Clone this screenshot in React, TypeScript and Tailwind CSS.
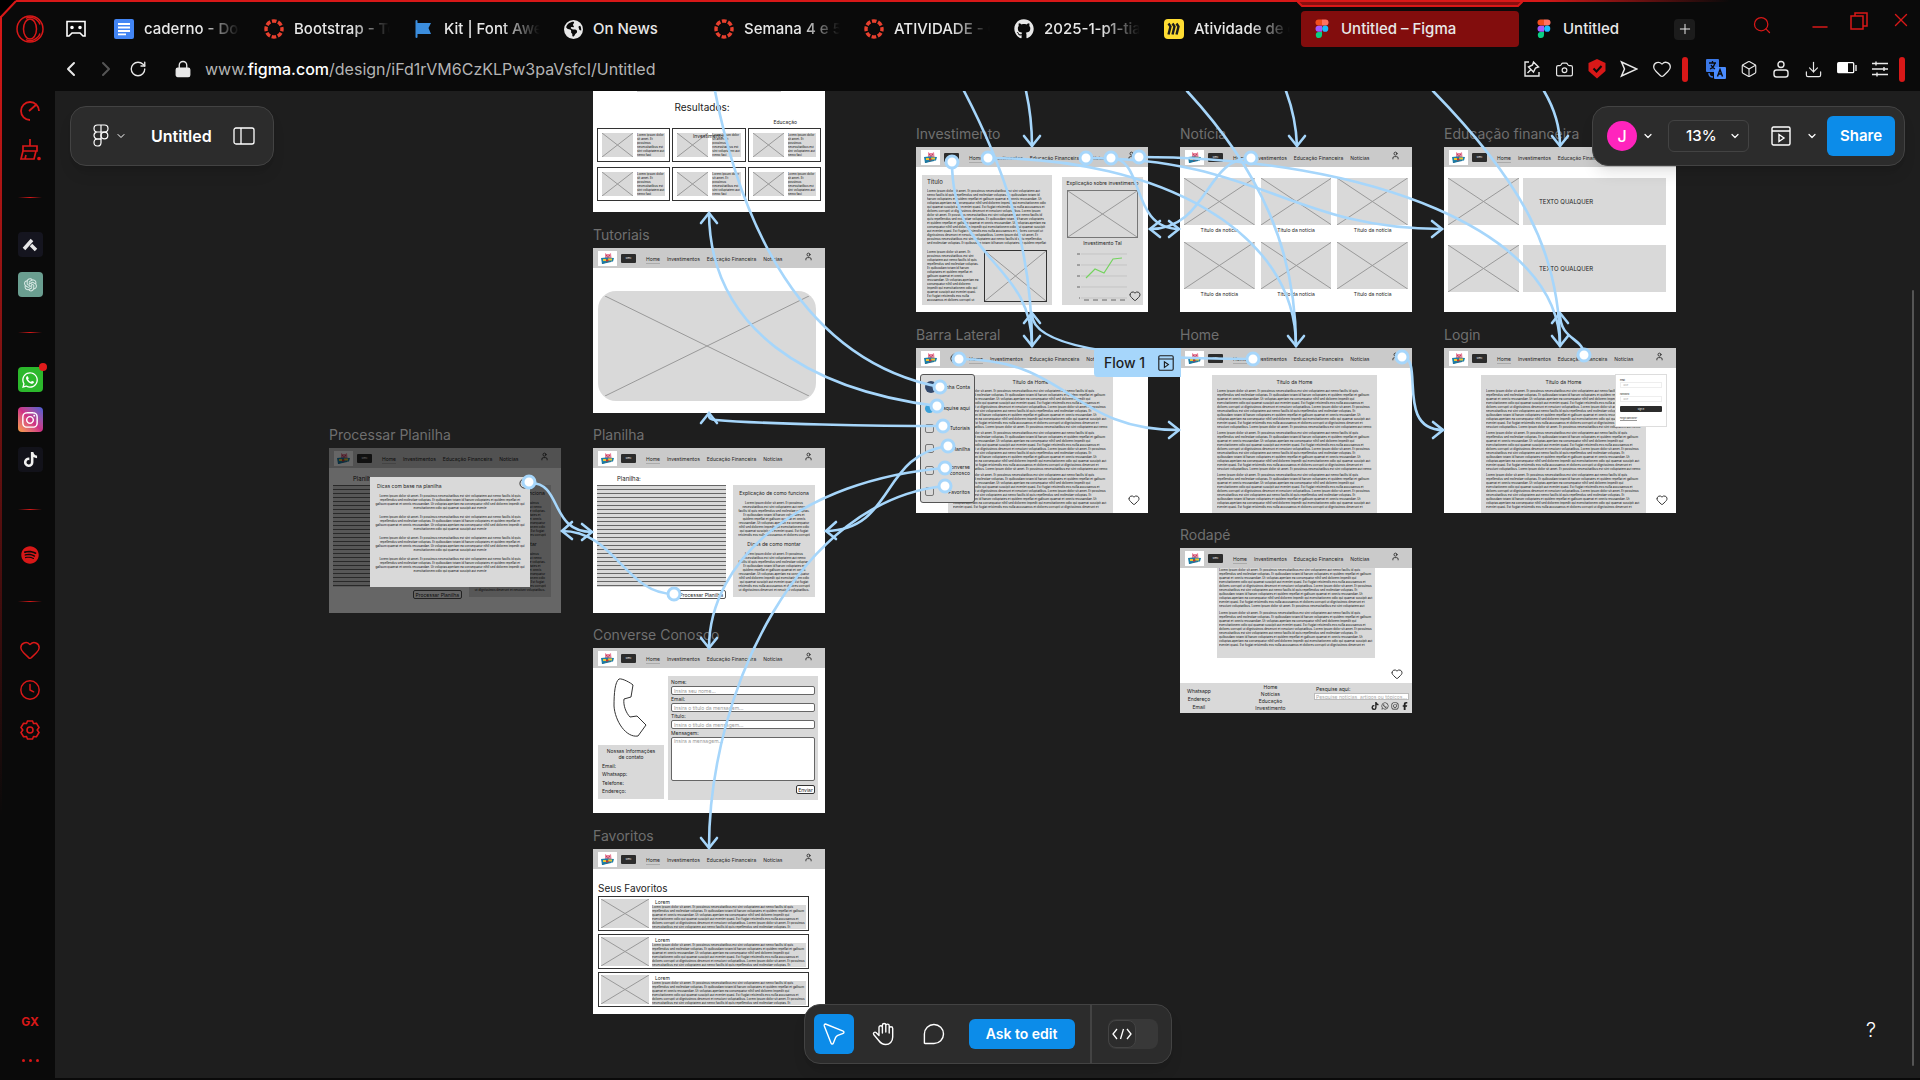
import React from "react";
import {
  Box,
  Camera,
  ChevronDown,
  ChevronLeft,
  ChevronRight,
  CircleX,
  Clock,
  Download,
  Heart,
  Lock,
  Minus,
  Plus,
  RotateCw,
  Search,
  User,
  X,
} from "lucide-react";
import { FaEarthAmericas, FaFacebookF, FaGithub, FaInstagram, FaSpotify, FaTiktok, FaWhatsapp } from "react-icons/fa6";
import { AiOutlineOpenAI } from "react-icons/ai";

const LOREM =
  "Lorem ipsum dolor sit amet. Et possimus necessitatibus est sint voluptatem aut nemo facilis id quis repellendus sed molestiae voluptas. Et quibusdam totam id harum voluptates et quidem repellat et galisum quaerat et omnis recusandae. Ut voluptas aperiam ea consequatur nihil sed dolorem impedit qui exercitationem odio qui quaerat suscipit aut eveniet quasi. Est fugiat reiciendis eos nulla accusamus et dolores corrupti ut dignissimos deserunt et nesciunt voluptatibus. ";
const PARAGRAPH = LOREM + LOREM;

/* ---------- logos ---------- */

function CanvasRing() {
  return (
    <svg viewBox="0 0 20 20" className="size-5 shrink-0">
      <circle cx="10" cy="10" r="8" fill="none" stroke="#e8402f" strokeWidth="3.4" strokeDasharray="4.6 1.68" strokeDashoffset="2.3" />
    </svg>
  );
}

function FigmaColor() {
  return (
    <svg viewBox="0 0 14 20" className="h-5 w-[14px] shrink-0">
      <path d="M3.5 0.5H7v6H3.5a3 3 0 0 1 0-6z" fill="#f24e1e" />
      <path d="M7 0.5h3.5a3 3 0 0 1 0 6H7z" fill="#ff7262" />
      <path d="M3.5 6.7H7v6H3.5a3 3 0 0 1 0-6z" fill="#a259ff" />
      <circle cx="10.2" cy="9.7" r="3.1" fill="#1abcfe" />
      <path d="M3.5 12.9H7v3.2a3.1 3.1 0 1 1-3.5-3.2z" fill="#0acf83" />
    </svg>
  );
}

function FigmaOutline() {
  return (
    <svg viewBox="0 0 16 24" className="h-6 w-4" fill="none" stroke="#fff" strokeWidth="1.2">
      <path d="M8 1H4.5a3.4 3.4 0 0 0 0 7H8zM8 1h3.5a3.4 3.4 0 0 1 0 7H8zM8 8H4.5a3.4 3.4 0 0 0 0 7H8z" />
      <circle cx="11.4" cy="11.5" r="3.4" />
      <path d="M8 15H4.6A3.5 3.5 0 1 0 8 18.7z" />
    </svg>
  );
}

function DocsLogo() {
  return (
    <svg viewBox="0 0 20 20" className="size-5 shrink-0">
      <rect width="20" height="20" rx="2" fill="#4285f4" />
      <path d="M4 5h12M4 8.5h12M4 12h12M4 15.300h8" stroke="#fff" strokeWidth="1.8" />
    </svg>
  );
}

function FlagLogo() {
  return (
    <svg viewBox="0 0 20 20" className="size-5 shrink-0">
      <path d="M2.500 2v16" stroke="#3b8ddd" strokeWidth="2" strokeLinecap="round" />
      <path d="M3 4h14l-2.500 5L17 15H3z" fill="#3b8ddd" />
    </svg>
  );
}

function MiroLogo() {
  return (
    <svg viewBox="0 0 20 20" className="size-5 shrink-0">
      <rect width="20" height="20" rx="4" fill="#ffdd33" />
      <path d="M4.500 4.500l2 3-2 8M8.500 4.500l2 3-2 8M12.500 4.500l2 3-2 8" stroke="#1c1c1e" strokeWidth="2.400" fill="none" />
    </svg>
  );
}

function OperaLogo() {
  return (
    <svg viewBox="0 0 28 28" className="size-7" fill="none" stroke="#d81818" strokeWidth="1.500">
      <circle cx="14" cy="14" r="13" />
      <ellipse cx="14" cy="14" rx="6.500" ry="10" />
      <path d="M10 3.500c4-3 12 0 14 6M10 24.500c4 3 12 0 14-6" />
    </svg>
  );
}

function PiggyLogo() {
  return (
    <svg viewBox="0 0 19 15" className="h-[15px] w-[19px] shrink-0">
      <rect width="19" height="15" fill="#fff" />
      <path d="M7 2l1.500 1h3L13 2l.5 5H7z" fill="#e8829a" />
      <path d="M8 4.500h1M11 4.500h1M9 6h2" stroke="#a33a55" strokeWidth="0.800" />
      <path d="M3 7l5-.5 8 .5-1 3.500-5 .5-6 2z" fill="#1d7fa8" />
      <path d="M5 8h3v2H5zM10 7.500h4v2h-4z" fill="#e9c630" />
      <path d="M8 8.500h2.500v2H8z" fill="#c8362c" />
      <path d="M4 12.500l9-2" stroke="#1f6f95" strokeWidth="1.200" />
    </svg>
  );
}

/* ---------- browser chrome ---------- */

function Tab({ icon, title, fade = true }: { icon: React.ReactNode; title: string; fade?: boolean }) {
  return (
    <button className="flex w-[150px] shrink-0 items-center gap-[10px] pr-6 text-left">
      {icon}
      <span
        className={
          fade
            ? "min-w-0 flex-1 overflow-hidden whitespace-nowrap [mask-image:linear-gradient(to_right,black_60%,transparent)]"
            : "whitespace-nowrap"
        }
      >
        {title}
      </span>
    </button>
  );
}

function BrowserHeader() {
  return (
    <header className="relative shrink-0 pb-[9px] text-[#e8e8e8]">
      <div className="flex h-14 items-center pt-[2px] text-[15px] font-medium">
        <button aria-label="Opera" className="ml-4">
          <OperaLogo />
        </button>
        <button aria-label="Workspace" className="ml-[22px] mr-[28px]">
          <svg viewBox="0 0 20 20" className="size-5" fill="none" stroke="#fff" strokeWidth="1.600">
            <path d="M1 2.500h18V17h-2l-3-3H6l-3 3H1z" />
            <circle cx="6" cy="8.500" r="1" fill="#fff" />
            <circle cx="14" cy="8.500" r="1" fill="#fff" />
          </svg>
        </button>
        <Tab icon={<DocsLogo />} title="caderno - Documentos" />
        <Tab icon={<CanvasRing />} title="Bootstrap - Tópicos" />
        <Tab icon={<FlagLogo />} title="Kit | Font Awesome" />
        <Tab icon={<FaEarthAmericas className="size-[19px] shrink-0" />} title="On News" fade={false} />
        <Tab icon={<CanvasRing />} title="Semana 4 e 5 - Aula" />
        <Tab icon={<CanvasRing />} title="ATIVIDADE - Grupo" />
        <Tab icon={<FaGithub className="size-5 shrink-0" />} title="2025-1-p1-tiaw" />
        <Tab icon={<MiroLogo />} title="Atividade de grupo" />
        <div className="relative -ml-[13px] w-[218px] shrink-0">
          <svg viewBox="0 0 226 8" className="absolute -top-[11px] -left-1 h-2 w-[226px]">
            <path d="M0 0h226l-5 6H5z" fill="#8a0f0f" />
            <path d="M0 1l5 5h216l5-5" fill="none" stroke="#d81818" strokeWidth="2" />
          </svg>
          <button className="flex h-9 w-full items-center gap-3 rounded bg-[#820d0d] pl-[14px]">
            <FigmaColor />
            Untitled – Figma
          </button>
        </div>
        <button className="ml-[18px] flex w-[137px] shrink-0 items-center gap-3">
          <FigmaColor />
          Untitled
        </button>
        <button aria-label="New tab" className="flex size-[21px] shrink-0 items-center justify-center rounded-sm bg-[#1c1c1c]">
          <Plus className="size-4" strokeWidth={1.5} />
        </button>
        <div className="ml-auto flex shrink-0 items-center pr-2 text-[#d81818]">
          <button aria-label="Search tabs" className="mr-9 mb-2">
            <Search className="size-5" strokeWidth={1.5} />
          </button>
          <button aria-label="Minimize" className="mb-1 mr-[18px]">
            <Minus className="size-6" strokeWidth={1.5} />
          </button>
          <button aria-label="Restore" className="mr-[22px] mb-4">
            <svg viewBox="0 0 18 18" className="size-[18px]" fill="none" stroke="currentColor" strokeWidth="1.500">
              <path d="M1 4h12v13H1zM5 4V1h12v13h-4" />
            </svg>
          </button>
          <button aria-label="Close" className="mb-[18px]">
            <X className="size-[22px]" strokeWidth={1.5} />
          </button>
        </div>
      </div>
      <div className="flex h-[26px] items-center">
        <button aria-label="Back" className="ml-[59px]">
          <ChevronLeft className="size-6" strokeWidth={2} />
        </button>
        <button aria-label="Forward" className="ml-[11px] text-[#555]">
          <ChevronRight className="size-6" strokeWidth={2} />
        </button>
        <button aria-label="Reload" className="ml-[11px]">
          <RotateCw className="size-[18px]" strokeWidth={1.8} />
        </button>
        <Lock className="ml-[27px] size-[18px] [&_rect]:fill-current" strokeWidth={1.8} />
        <span className="ml-[13px] text-base text-[#b4b4b4]">
          www.<span className="font-medium text-white">figma.com</span>/design/iFd1rVM6CzKLPw3paVsfcI/Untitled
        </span>
        <div className="ml-auto flex items-center gap-[14px] pr-[15px]">
          <button aria-label="Pin">
            <svg viewBox="0 0 18 18" className="size-[18px]" fill="none" stroke="currentColor" strokeWidth="1.400">
              <path d="M6 2H2v14h14v-4" />
              <path d="M10.500 2l5 5-3 1-2 4-5-5 4-2zM8 9.500L4.500 13" />
            </svg>
          </button>
          <button aria-label="Snapshot">
            <Camera className="size-[19px]" strokeWidth={1.5} />
          </button>
          <button aria-label="Ad blocker">
            <svg viewBox="0 0 18 20" className="h-5 w-[18px]">
              <path d="M9 0l8.500 4v8L9 19.500 0.500 12V4z" fill="#d81818" />
              <path d="M5.500 9.500l3 3 5-5.500" fill="none" stroke="#0a0a0a" strokeWidth="2" />
            </svg>
          </button>
          <button aria-label="Send">
            <svg viewBox="0 0 18 18" className="size-[18px]" fill="none" stroke="currentColor" strokeWidth="1.500">
              <path d="M1.500 2l15.500 7-15.500 7 3-7z" />
            </svg>
          </button>
          <button aria-label="Favorite">
            <Heart className="size-5" strokeWidth={1.5} />
          </button>
          <span className="-ml-1 h-[25px] w-[6px] rounded-sm bg-[#d81818]" />
          <button aria-label="Translate" className="ml-1">
            <svg viewBox="0 0 20 20" className="size-5">
              <rect width="13" height="13" rx="1" fill="#3b78e7" />
              <rect x="8" y="8" width="12" height="12" rx="1" fill="#4a8cff" />
              <path d="M3 4h7M6.500 2v2M4 10c3-1 4-3 5-6M5 6c1 2 2 3 4 4" stroke="#0a0a0a" strokeWidth="1.300" fill="none" />
              <path d="M11.500 17.500l2.500-7 2.500 7M12.500 15h3" stroke="#0a0a0a" strokeWidth="1.400" fill="none" />
              <path d="M3 14c0 3 2 4 4 4" stroke="#3b78e7" strokeWidth="1.500" fill="none" />
            </svg>
          </button>
          <button aria-label="Extensions">
            <Box className="size-[18px]" strokeWidth={1.5} />
          </button>
          <button aria-label="Profile">
            <svg viewBox="0 0 18 18" className="size-[18px]" fill="none" stroke="currentColor" strokeWidth="1.400">
              <circle cx="9" cy="4.500" r="3" />
              <rect x="2" y="10" width="14" height="7" rx="2.500" />
            </svg>
          </button>
          <button aria-label="Downloads">
            <Download className="size-[19px]" strokeWidth={1.5} />
          </button>
          <button aria-label="Battery">
            <svg viewBox="0 0 20 12" className="mb-[2px] h-3 w-5">
              <rect x="0.700" y="0.700" width="16" height="10" rx="1" fill="none" stroke="#fff" strokeWidth="1.300" />
              <rect x="1" y="1" width="10" height="10" fill="#fff" />
              <path d="M19 3v6" stroke="#fff" strokeWidth="1.300" />
            </svg>
          </button>
          <button aria-label="Easy setup">
            <svg viewBox="0 0 18 18" className="size-[18px]" stroke="currentColor" strokeWidth="1.400">
              <path d="M1 3.500h16M1 9h16M1 14.500h16M5 1.500v4M13 7v4M6 12.500v4" />
            </svg>
          </button>
          <span className="-ml-1 h-[25px] w-[6px] rounded-sm bg-[#d81818]" />
        </div>
      </div>
    </header>
  );
}

function SideRule() {
  return <span className="h-px w-6 bg-linear-to-r from-transparent via-[#d81818] to-transparent" />;
}

function BrowserSidebar() {
  return (
    <aside className="flex w-[55px] shrink-0 flex-col items-center pt-[7px] pb-[14px] pl-[5px] text-[#d81818]">
      <button aria-label="Speed dial" className="flex h-[25px] items-center">
        <svg viewBox="0 0 22 22" className="size-[22px]" fill="none" stroke="currentColor" strokeWidth="1.800">
          <path d="M11 20A9 9 0 1 1 20 11M10 11l8-7" />
        </svg>
      </button>
      <button aria-label="Cleaner" className="mt-[14px] flex h-[25px] items-center">
        <svg viewBox="0 0 22 22" className="size-[22px]" fill="none" stroke="currentColor" strokeWidth="1.700">
          <path d="M11 0v7M4 7h14v5H4zM4 12l-2 8h13l2-8M6 20l1-4" />
          <circle cx="20" cy="19.500" r="1" fill="currentColor" />
        </svg>
      </button>
      <div className="flex h-[70px] items-center"><SideRule /></div>
      <button aria-label="Aria" className="flex size-[25px] items-center justify-center rounded bg-[#15151f]">
        <svg viewBox="0 0 16 16" className="size-4" stroke="#e8e8e8" strokeWidth="3.500" fill="none">
          <path d="M2 12l8-9M9 8l5 5" />
        </svg>
      </button>
      <button aria-label="ChatGPT" className="mt-[15px] flex size-[25px] items-center justify-center rounded bg-[#6a9e90] text-[#d8e8e4]">
        <AiOutlineOpenAI className="size-[17px]" />
      </button>
      <div className="flex h-[70px] items-center"><SideRule /></div>
      <button aria-label="WhatsApp" className="relative flex size-[25px] items-center justify-center rounded bg-[#2cb82c] text-white">
        <FaWhatsapp className="size-[18px]" />
        <span className="absolute -top-1 -right-1 size-2 rounded-full bg-[#e01b1b]" />
      </button>
      <button aria-label="Instagram" className="mt-[15px] flex size-[25px] items-center justify-center rounded bg-linear-to-tr from-[#f9a13c] via-[#cf2f86] to-[#3f5bd6] text-white">
        <FaInstagram className="size-[18px]" />
      </button>
      <button aria-label="TikTok" className="mt-[15px] flex size-[25px] items-center justify-center rounded bg-[#12121a] text-[#f0f0f0]">
        <FaTiktok className="size-[15px]" />
      </button>
      <div className="flex h-[74px] items-center"><SideRule /></div>
      <button aria-label="Player"><FaSpotify className="size-[18px]" /></button>
      <div className="flex h-[75px] items-center"><SideRule /></div>
      <button aria-label="Favorites"><Heart className="size-[22px]" strokeWidth={1.6} /></button>
      <button aria-label="History" className="mt-[18px]"><Clock className="size-[22px]" strokeWidth={1.6} /></button>
      <button aria-label="Settings" className="mt-[18px]">
        <svg viewBox="0 0 22 22" className="size-[22px]" fill="none" stroke="currentColor" strokeWidth="1.600">
          <path d="M8.500 2h5l1 2.500 3-.2 2.500 4.200-1.800 2.500 1.800 2.500-2.500 4.200-3-.2-1 2.500h-5l-1-2.500-3 .2L2 13.500 3.800 11 2 8.500l2.500-4.200 3 .2z" />
          <circle cx="11" cy="11" r="3" />
        </svg>
      </button>
      <span className="mt-auto text-xs font-bold">GX</span>
      <button aria-label="More" className="mt-[29px] mb-1 flex gap-1">
        <span className="size-[3px] rounded-full bg-[#d81818]" />
        <span className="size-[3px] rounded-full bg-[#d81818]" />
        <span className="size-[3px] rounded-full bg-[#d81818]" />
      </button>
    </aside>
  );
}

/* ---------- wireframe pieces ---------- */

function Cross({ className = "" }: { className?: string }) {
  return (
    <svg viewBox="0 0 100 100" preserveAspectRatio="none" className={"block bg-[#d9d9d9] " + className}>
      <path d="M0 0L100 100M100 0L0 100" stroke="#999" strokeWidth="1" vectorEffect="non-scaling-stroke" />
    </svg>
  );
}

function Tiny({ className = "", text = PARAGRAPH }: { className?: string; text?: string }) {
  return <p className={"overflow-hidden text-[3px] leading-[4px] font-medium text-[#2b2b2b] " + className}>{text}</p>;
}

function SiteNav({ closable = false }: { closable?: boolean }) {
  return (
    <div className="flex h-5 shrink-0 items-center bg-[#cacaca] pl-[5px] pr-3">
      <PiggyLogo />
      {closable ? (
        <CircleX className="ml-[10px] mr-[-2px] size-[11px]" color="#222" strokeWidth={2} />
      ) : (
        <button className="ml-1 h-[9px] w-[15px] rounded-[1px] bg-[#2c2c2c] text-center text-[2px] leading-[9px] text-white">Menu</button>
      )}
      <nav className="ml-[10px] flex gap-[7px] pt-[2px] text-[5px] leading-[8px] text-[#222]">
        <a href="#home" className="border-b border-[#aaa]">Home</a>
        <a href="#investimentos">Investimentos</a>
        <a href="#educacao">Educação Financeira</a>
        <a href="#noticias">Notícias</a>
      </nav>
      <User className="mb-1 ml-auto size-[9px]" color="#333" strokeWidth={2.5} />
    </div>
  );
}

function Artboard({ title, place, children }: { title: string; place: string; children: React.ReactNode }) {
  return (
    <section className={"absolute w-[232px] " + place}>
      <h2 className="mb-[3px] whitespace-nowrap pt-px text-sm leading-5 text-[#6f6f6f]">{title}</h2>
      <div className="relative flex h-[165px] flex-col overflow-hidden bg-white text-[#222]">{children}</div>
    </section>
  );
}

function FrameHeart({ place = "right-2 bottom-[7px]" }: { place?: string }) {
  return <Heart className={"absolute size-3 " + place} color="#333" strokeWidth={2} />;
}

function ResultsBoard() {
  const cells = [0, 1, 2, 3, 4, 5];
  return (
    <Artboard title="Pesquisa" place="left-[538px] top-[-68px]">
      <div className="mx-auto mt-[44px] h-px w-36 bg-[#ccc]" />
      <h3 className="pr-[14px] pt-[8px] text-center text-[10px] leading-[14px]">Resultados:</h3>
      <p className="pr-7 pt-[5px] text-right text-[5px] leading-[6px]">Educação</p>
      <div className="relative grid grid-cols-3 gap-x-[2px] gap-y-[5px] px-1 pt-[3px]">
        {cells.map((c) => (
          <div key={c} className="flex h-[34px] gap-1 border border-[#333] p-1">
            <Cross className="h-6 w-[31px]" />
            <Tiny className="h-6 flex-1 bg-[#d9d9d9]" text={LOREM.slice(0, 88)} />
          </div>
        ))}
        <span className="absolute left-[100px] top-[8px] text-[5px] leading-[6px]">Investimento</span>
      </div>
    </Artboard>
  );
}

function TutorialsBoard() {
  return (
    <Artboard title="Tutoriais" place="left-[538px] top-[133px]">
      <SiteNav />
      <div className="mr-[9px] ml-[5px] mt-[23px] flex h-[110px] rounded-[18px] bg-[#d9d9d9] px-[7px] py-[5px]">
        <Cross className="h-full w-full" />
      </div>
    </Artboard>
  );
}

function SheetContent() {
  return (
    <>
      <SiteNav />
      <h3 className="pl-6 pt-2 text-[6px] leading-[6px]">Planilha:</h3>
      <div className="flex justify-between pl-1 pr-[10px] pt-[3px]">
        <div className="w-[129px]">
          <div className="h-[102px] bg-[repeating-linear-gradient(to_bottom,#666_0px,#666_1px,#d9d9d9_1px,#d9d9d9_4px)]" />
          <div className="flex justify-end pt-[3px]">
            <button className="h-[9px] rounded-[2px] border border-[#555] px-[2px] text-[5px] leading-[6px]">Processar Planilha</button>
          </div>
        </div>
        <div className="h-[112px] w-[82px] bg-[#d9d9d9] px-[5px] pt-[5px] text-center">
          <h4 className="whitespace-nowrap text-[5px] leading-[6px]">Explicação de como funciona</h4>
          <Tiny className="mt-[5px] h-9" />
          <h4 className="mt-1 text-[5px] leading-[6px]">Dicas de como montar</h4>
          <Tiny className="mt-[5px] h-10" />
        </div>
      </div>
    </>
  );
}

function SheetBoard() {
  return (
    <Artboard title="Planilha" place="left-[538px] top-[333px]">
      <SheetContent />
    </Artboard>
  );
}

function ProcessBoard() {
  return (
    <Artboard title="Processar Planilha" place="left-[274px] top-[333px]">
      <SheetContent />
      <div className="absolute inset-0 bg-black/60" />
      <div className="absolute left-[41px] top-[29px] h-[110px] w-40 bg-[#d9d9d9] px-1 pt-[6px]">
        <h3 className="px-[3px] text-[5px] leading-[6px]">Dicas com base na planilha</h3>
        {[0, 1, 2, 3].map((k) => (
          <Tiny key={k} className="mt-[5px] h-4 text-center" text={PARAGRAPH.slice(0, 350)} />
        ))}
        <CircleX className="absolute right-0 top-[1px] size-[11px]" color="#222" strokeWidth={2} />
      </div>
    </Artboard>
  );
}

function ContactBoard() {
  const field = "w-full rounded-[2px] border border-[#666] bg-white px-[2px] text-[5px] leading-[6px] placeholder:text-[#999]";
  return (
    <Artboard title="Converse Conosco" place="left-[538px] top-[533px]">
      <SiteNav />
      <div className="flex gap-1 pl-[5px] pr-[7px] pt-2">
        <div className="w-[66px]">
          <svg viewBox="0 0 36 62" className="mx-auto mt-[1px] h-[62px] w-9" fill="none" stroke="#333" strokeWidth="1">
            <path d="M6 2c3-1 12 4 14 6l-2 12-7 2c-1 6 2 14 6 18l7-1 9 9-8 11c-12 2-23-15-24-30C1 16 2 5 6 2z" />
          </svg>
          <div className="mt-[6px] h-[54px] bg-[#d9d9d9] px-1 pt-[3px] text-[5px] leading-[6px]">
            <p className="text-center">Nossas Informações<br />de contato</p>
            <p className="mt-[3px]">Email:</p>
            <p className="mt-[2px]">Whatsapp:</p>
            <p className="mt-[3px]">Telefone:</p>
            <p className="mt-[2px]">Endereço:</p>
          </div>
        </div>
        <form className="flex h-[124px] flex-1 flex-col bg-[#d9d9d9] px-[3px] pt-[3px] text-[5px] leading-[7px]">
          <label htmlFor="c-name">Nome:</label>
          <input id="c-name" className={"mb-[1px] h-[9px] " + field} placeholder="Insira seu nome..." />
          <label htmlFor="c-email">Email:</label>
          <input id="c-email" className={"mb-[1px] h-[9px] " + field} placeholder="Insira o título da mensagem..." />
          <label htmlFor="c-title">Título:</label>
          <input id="c-title" className={"mb-[1px] h-[9px] " + field} placeholder="Insira o título da mensagem..." />
          <label htmlFor="c-msg">Mensagem:</label>
          <textarea id="c-msg" className={"h-11 resize-none " + field} placeholder="Insira a mensagem..." />
          <button type="button" className="mt-1 h-[9px] w-[19px] self-end rounded-[2px] border border-[#333] bg-white text-[5px] leading-[6px]">Enviar</button>
        </form>
      </div>
    </Artboard>
  );
}

function FavoritesBoard() {
  return (
    <Artboard title="Favoritos" place="left-[538px] top-[734px]">
      <SiteNav />
      <h3 className="pl-[5px] pt-[13px] text-[10px] leading-[12px]">Seus Favoritos</h3>
      <div className="flex flex-col gap-[3px] pl-[5px] pr-4 pt-[2px]">
        {[0, 1, 2].map((k) => (
          <div key={k} className="flex h-[35px] gap-[3px] border border-[#333] px-[2px] pt-[2px]">
            <Cross className="h-[29px] w-12" />
            <div className="flex-1">
              <h4 className="pl-[3px] text-[5px] leading-[6px]">Lorem</h4>
              <Tiny className="h-6 bg-[#d9d9d9]" />
            </div>
          </div>
        ))}
      </div>
    </Artboard>
  );
}

function InvestmentBoard() {
  return (
    <Artboard title="Investimento" place="left-[861px] top-[32px]">
      <SiteNav />
      <div className="flex gap-[10px] pl-[6px] pr-[5px] pt-2">
        <div className="h-[130px] w-[130px] bg-[#d9d9d9] px-[5px] pt-1">
          <h3 className="text-[6px] leading-[6px]">Título</h3>
          <Tiny className="mt-1 h-14" text={PARAGRAPH + PARAGRAPH} />
          <div className="mt-[5px] flex gap-1">
            <Tiny className="h-[52px] w-[53px]" />
            <Cross className="h-[52px] flex-1 border border-[#333]" />
          </div>
        </div>
        <div className="relative mt-[2px] h-[128px] w-[81px] bg-[#d9d9d9] px-[5px] pt-[3px] text-center text-[5px] leading-[7px]">
          <h3 className="-mx-1 whitespace-nowrap">Explicação sobre investimento</h3>
          <Cross className="mt-[3px] h-12 w-full border border-[#777]" />
          <h3 className="mt-[2px]">Investimento Tal</h3>
          <svg viewBox="0 0 60 52" className="mt-1 h-[52px] w-[60px]" fill="none">
            <path d="M14 3h46M14 14h46M14 25h46M14 36h46M14 47h46" stroke="#bbb" strokeWidth="0.700" />
            <path d="M10 3h3M10 14h3M10 25h3M10 36h3M12 47h1M17 49h5M26 49h5M35 49h5M44 49h5M53 49h5" stroke="#666" strokeWidth="1" />
            <path d="M19 27l9-9 9 4 9-14 9-1" stroke="#74d35f" strokeWidth="1.200" />
          </svg>
          <FrameHeart place="right-[2px] bottom-[3px]" />
        </div>
      </div>
    </Artboard>
  );
}

function NewsBoard() {
  return (
    <Artboard title="Notícia" place="left-[1125px] top-[32px]">
      <SiteNav />
      <div className="grid grid-cols-3 gap-x-[6px] px-1 pt-[11px] text-center text-[5px] leading-[8px]">
        {[0, 1, 2, 3, 4, 5].map((k) => (
          <figure key={k} className="pb-2">
            <Cross className="h-[47px] w-full" />
            <figcaption className="pt-px">Título da notícia</figcaption>
          </figure>
        ))}
      </div>
    </Artboard>
  );
}

function EducationBoard() {
  return (
    <Artboard title="Educação financeira" place="left-[1389px] top-[32px]">
      <SiteNav />
      <div className="flex flex-col gap-5 pl-1 pr-[10px] pt-[11px]">
        {[0, 1].map((k) => (
          <div key={k} className="flex gap-1">
            <Cross className="h-[47px] w-[71px]" />
            <p className="flex h-[47px] flex-1 items-center bg-[#d9d9d9] pl-4 text-[6px]">TEXTO QUALQUER</p>
          </div>
        ))}
      </div>
    </Artboard>
  );
}

function HomeText({ inset }: { inset: string }) {
  return (
    <div className={"mt-[7px] h-[138px] w-[165px] shrink-0 bg-[#d9d9d9] px-[5px] pt-1 " + inset}>
      <h3 className="text-center text-[5px] leading-[6px]">Título da Home</h3>
      <Tiny className="mt-1 h-10" text={PARAGRAPH + LOREM} />
      <Tiny className="mt-[2px] h-10" text={PARAGRAPH + LOREM} />
      <Tiny className="mt-[2px] h-9" text={PARAGRAPH + LOREM} />
    </div>
  );
}

function SideMenuBoard() {
  const items = ["Minha Conta", "Pesquise aqui", "Tutoriais", "Planilha", "Converse conosco", "Favoritos"];
  return (
    <Artboard title="Barra Lateral" place="left-[861px] top-[233px]">
      <SiteNav closable />
      <HomeText inset="ml-8" />
      <ul className="absolute left-1 top-[26px] flex h-[129px] w-[55px] flex-col justify-around rounded-[3px] border border-[#555] bg-[#d9d9d9] px-1 text-right text-[5px] leading-[6px]">
        {items.map((t, i) => (
          <li key={t} className="flex items-center justify-between">
            <span
              className={
                i === 0
                  ? "size-3 shrink-0 rounded-full bg-[#34496b]"
                  : i === 1
                    ? "size-[9px] shrink-0 rounded-full bg-[#3aa0d8]"
                    : "size-[9px] shrink-0 rounded-[2px] border border-[#777]"
              }
            />
            {t}
          </li>
        ))}
      </ul>
      <FrameHeart />
    </Artboard>
  );
}

function HomeBoard() {
  return (
    <Artboard title="Home" place="left-[1125px] top-[233px]">
      <SiteNav />
      <HomeText inset="ml-8" />
    </Artboard>
  );
}

function LoginBoard() {
  return (
    <Artboard title="Login" place="left-[1389px] top-[233px]">
      <SiteNav />
      <HomeText inset="ml-[37px]" />
      <form className="absolute left-[171px] top-[26px] flex h-[53px] w-[52px] flex-col border border-[#ddd] bg-white px-1 pt-[3px] text-[2px] leading-[4px]">
        <label htmlFor="l-email">Email</label>
        <input id="l-email" className="mb-1 h-[6px] w-full border border-[#eee] px-[2px] placeholder:text-[#aaa]" placeholder="Value" />
        <label htmlFor="l-pass">Password</label>
        <input id="l-pass" className="mb-1 h-[6px] w-full border border-[#eee] px-[2px] placeholder:text-[#aaa]" placeholder="Value" />
        <button type="button" className="h-[6px] rounded-[1px] bg-[#2c2c2c] text-white">Sign In</button>
        <a href="#forgot" className="mt-1 self-start border-b border-[#999]">Forgot password?</a>
      </form>
      <FrameHeart />
    </Artboard>
  );
}

function FooterBoard() {
  return (
    <Artboard title="Rodapé" place="left-[1125px] top-[433px]">
      <SiteNav />
      <div className="ml-[37px] h-[90px] w-[158px] bg-[#d9d9d9] px-[2px]">
        <Tiny className="h-10" text={PARAGRAPH + LOREM} />
        <Tiny className="mt-[3px] h-9" text={PARAGRAPH + LOREM} />
      </div>
      <FrameHeart place="right-[9px] bottom-[33px]" />
      <footer className="mt-auto flex h-[30px] justify-between bg-[#d9d9d9] pl-[7px] pr-[3px] text-[5px]">
        <p className="pt-1 text-center leading-[8px]">Whatsapp<br />Endereço<br />Email</p>
        <p className="pl-4 pt-px text-center leading-[7px]">Home<br />Notícias<br />Educação<br />Investimento</p>
        <div className="w-[95px] pt-[2px]">
          <label htmlFor="f-search" className="block pl-[2px] leading-[8px]">Pesquise aqui:</label>
          <input id="f-search" className="block h-[7px] w-full border border-[#bbb] bg-white px-[1px] text-[5px] leading-[5px] placeholder:text-[#aaa]" placeholder="Pesquise notícias, artigos ou tópicos..." />
          <div className="flex justify-end gap-[2px] pt-[2px]">
            <FaTiktok className="size-2" />
            <FaWhatsapp className="size-2" />
            <FaInstagram className="size-2" />
            <FaFacebookF className="size-2" />
          </div>
        </div>
      </footer>
    </Artboard>
  );
}

/* ---------- prototype links ---------- */

const LINKS = [
  "M715 91C740 220 800 360 940 387",
  "M709 213C710 330 810 390 937 406",
  "M709 414Q708 420 716 420C760 424 880 426 943 426",
  "M948 446C880 455 895 530 826 531",
  "M945 468C800 480 709 560 709 648",
  "M945 486C800 500 709 690 709 848",
  "M674 594C625 594 615 531 562 531",
  "M531 483C562 483 550 532 592 532",
  "M952 162C952 262 1032 262 1032 346",
  "M964 91C1000 160 1032 240 1032 346",
  "M1026 91Q1032 118 1032 146",
  "M988 158C1160 158 1296 232 1296 346",
  "M1086 158C1260 158 1290 229 1442 229",
  "M1111 158C1145 158 1130 229 1179 229",
  "M1139 157C1370 157 1560 232 1560 346",
  "M1251 158C1205 158 1208 229 1150 229",
  "M1187 91C1260 170 1296 250 1296 346",
  "M1286 91Q1296 118 1297 146",
  "M1433 91C1520 180 1560 250 1560 346",
  "M1544 91Q1560 118 1560 146",
  "M1253 359C1150 359 1032 352 1032 314",
  "M959 359C1070 359 1070 430 1179 430",
  "M1402 357C1425 357 1395 430 1443 430",
  "M1584 355C1584 338 1560 340 1560 314",
];

const HEADS = [
  "M701 223l8-10 8 10",
  "M701 423l8-10 8 10",
  "M836 522l-10 9 10 8",
  "M701 638l8 10 8-10",
  "M701 838l8 10 8-10",
  "M572 522l-10 9 10 8",
  "M582 524l10 8-10 8",
  "M1024 336l8 10 8-10",
  "M1024 136l8 10 8-10",
  "M1288 336l8 10 8-10",
  "M1432 221l10 8-10 8",
  "M1169 221l10 8-10 8",
  "M1552 336l8 10 8-10",
  "M1160 221l-10 8 10 8",
  "M1289 136l8 10 8-10",
  "M1552 136l8 10 8-10",
  "M1024 323l8-10 8 10",
  "M1169 422l10 8-10 8",
  "M1433 422l10 8-10 8",
  "M1552 323l8-10 8 10",
];

const DOTS: [number, number][] = [
  [940, 387], [937, 406], [943, 426], [948, 446], [945, 468], [945, 486],
  [674, 594], [529, 482], [952, 162], [988, 158], [1086, 158], [1111, 158],
  [1139, 157], [1251, 158], [1253, 359], [959, 359], [1402, 357], [1584, 355],
];

function PrototypeLinks() {
  return (
    <svg width="1865" height="987" className="pointer-events-none absolute left-0 top-0" fill="none" stroke="#a6d6fb" strokeLinecap="round">
      <g transform="translate(-55 -91)">
        {LINKS.map((d) => <path key={d} d={d} strokeWidth="2.600" />)}
        {HEADS.map((d) => <path key={d} d={d} strokeWidth="2.600" />)}
        {DOTS.map(([x, y]) => <circle key={x + "-" + y} cx={x} cy={y} r="6" fill="#fff" strokeWidth="3" />)}
      </g>
    </svg>
  );
}

function PlayWindow({ className = "" }: { className?: string }) {
  return (
    <svg viewBox="0 0 20 20" className={className} fill="none" stroke="currentColor" strokeWidth="1.400">
      <rect x="1" y="1" width="18" height="18" rx="1.500" />
      <path d="M1 5h18M8 8.500v7l5-3.500z" />
    </svg>
  );
}

/* ---------- editor panels ---------- */

const PANEL = "absolute flex h-[60px] items-center rounded-2xl border border-[#434343] bg-[#2c2c2c] shadow-lg";

function TitlePanel() {
  return (
    <div className={PANEL + " left-[15px] top-[15px] w-[204px] pl-[22px] pr-[18px]"}>
      <button aria-label="Main menu" className="flex items-center gap-[6px]">
        <FigmaOutline />
        <ChevronDown className="size-3" strokeWidth={2} />
      </button>
      <span className="ml-[24px] text-base font-semibold">Untitled</span>
      <button aria-label="Toggle panels" className="ml-auto">
        <svg viewBox="0 0 22 18" className="h-[18px] w-[22px]" fill="none" stroke="#fff" strokeWidth="1.300">
          <rect x="1" y="1" width="20" height="16" rx="2" />
          <path d="M8 1v16" />
        </svg>
      </button>
    </div>
  );
}

function SharePanel() {
  return (
    <div className={PANEL + " right-[15px] top-[15px] w-[313px] pl-[14px] pr-[9px]"}>
      <button className="flex items-center gap-[5px]">
        <span className="flex size-[30px] items-center justify-center rounded-full bg-[#ff24bd] text-base font-medium">J</span>
        <ChevronDown className="size-3" strokeWidth={2.4} />
      </button>
      <button className="ml-[14px] flex h-8 w-[81px] items-center justify-between rounded-md border border-[#434343] pl-[17px] pr-[7px] text-[15px] font-medium">
        13%
        <ChevronDown className="size-3" strokeWidth={2.4} />
      </button>
      <button aria-label="Present" className="ml-[22px]"><PlayWindow className="size-5" /></button>
      <button aria-label="Present options" className="ml-auto mr-[9px]"><ChevronDown className="size-3" strokeWidth={2.4} /></button>
      <button className="h-10 w-[68px] rounded-md bg-[#0c8ce9] text-[15px] font-semibold">Share</button>
    </div>
  );
}

function ToolPanel() {
  return (
    <div className={PANEL + " bottom-[14px] left-1/2 w-[368px] -translate-x-1/2 pl-[9px]"}>
      <button aria-label="Move" className="flex size-10 items-center justify-center rounded-md bg-[#0c8ce9]">
        <svg viewBox="0 0 24 24" className="size-6" fill="none" stroke="#fff" strokeWidth="1.400" strokeLinejoin="round">
          <path d="M3.500 2c-1 0-1.500 1-1.200 1.900l6.800 17.300c.4 1 1.800 1 2.200 0l2.400-6 1.500-1.500 6-2.400c1-.4 1-1.800 0-2.200z" />
        </svg>
      </button>
      <button aria-label="Hand" className="ml-[18px]">
        <svg viewBox="0 0 24 24" className="size-6" fill="none" stroke="#fff" strokeWidth="1.400" strokeLinecap="round" strokeLinejoin="round">
          <path d="M7 13V5.500a1.700 1.700 0 0 1 3.400 0V11M10.400 10V3.200a1.700 1.700 0 0 1 3.400 0V10M13.800 10V3.800a1.700 1.700 0 0 1 3.400 0V11M17.200 11V6.500a1.700 1.700 0 0 1 3.500 0V15c0 4.500-3 7.500-7 7.500-3.500 0-5-1.200-7-4l-5-6c-.9-1.500 1-3 2.300-2L7 13.500" />
        </svg>
      </button>
      <button aria-label="Comment" className="ml-[26px]">
        <svg viewBox="0 0 24 24" className="size-6" fill="none" stroke="#fff" strokeWidth="1.400" strokeLinejoin="round">
          <path d="M12 2.500a9.500 9.500 0 1 1 0 19H3c-.4 0-.6-.2-.6-.6V12A9.500 9.500 0 0 1 12 2.500z" />
        </svg>
      </button>
      <button className="ml-[23px] h-[30px] w-[106px] rounded-md bg-[#0c8ce9] text-sm font-semibold">Ask to edit</button>
      <span className="ml-[15px] h-full w-[2px] bg-[#434343]" />
      <button aria-label="Dev Mode" className="ml-4 flex h-[30px] w-[50px] items-center rounded-lg bg-[#383838]">
        <span className="flex size-[28px] items-center justify-center rounded-lg border border-[#444] bg-[#2c2c2c]">
          <svg viewBox="0 0 20 12" className="h-3 w-5" fill="none" stroke="#fff" strokeWidth="1.300">
            <path d="M5 1L1 6l4 5M15 1l4 5-4 5M11.500 1l-3 10" />
          </svg>
        </span>
      </button>
    </div>
  );
}

export default function App() {
  return (
    <div className="relative flex h-screen flex-col overflow-hidden bg-[#0a0a0a] font-['Inter',sans-serif]">
      <BrowserHeader />
      <div className="flex min-h-0 flex-1">
        <BrowserSidebar />
        <main className="relative mb-[2px] flex-1 overflow-hidden bg-[#1e1e1e] text-white">
          <ResultsBoard />
          <TutorialsBoard />
          <SheetBoard />
          <ProcessBoard />
          <ContactBoard />
          <FavoritesBoard />
          <InvestmentBoard />
          <NewsBoard />
          <EducationBoard />
          <SideMenuBoard />
          <HomeBoard />
          <LoginBoard />
          <FooterBoard />
          <PrototypeLinks />
          <button className="absolute left-[1039px] top-[257px] flex h-[29px] w-[87px] items-center justify-between rounded-l bg-[#a6d6fb] pl-[10px] pr-[7px] text-sm font-medium text-[#1e1e1e]">
            Flow 1
            <PlayWindow className="size-4" />
          </button>
          <TitlePanel />
          <SharePanel />
          <ToolPanel />
          <button aria-label="Help" className="absolute right-[44px] bottom-[34px] text-xl font-light">?</button>
          <span className="absolute right-[6px] top-[199px] bottom-3 w-[2px] rounded bg-[#555]" />
        </main>
      </div>
      <span className="absolute left-4 right-0 top-0 h-[2px] bg-linear-to-r from-[#d81818] from-80% to-transparent to-90%" />
      <span className="absolute left-0 top-4 h-[800px] w-[2px] bg-linear-to-b from-[#d81818] to-transparent" />
      <svg viewBox="0 0 18 18" className="absolute left-0 top-0 size-[18px]">
        <path d="M0 0h16L0 16z" fill="#000" />
        <path d="M1 17l15-16" stroke="#d81818" strokeWidth="2" />
      </svg>
    </div>
  );
}
